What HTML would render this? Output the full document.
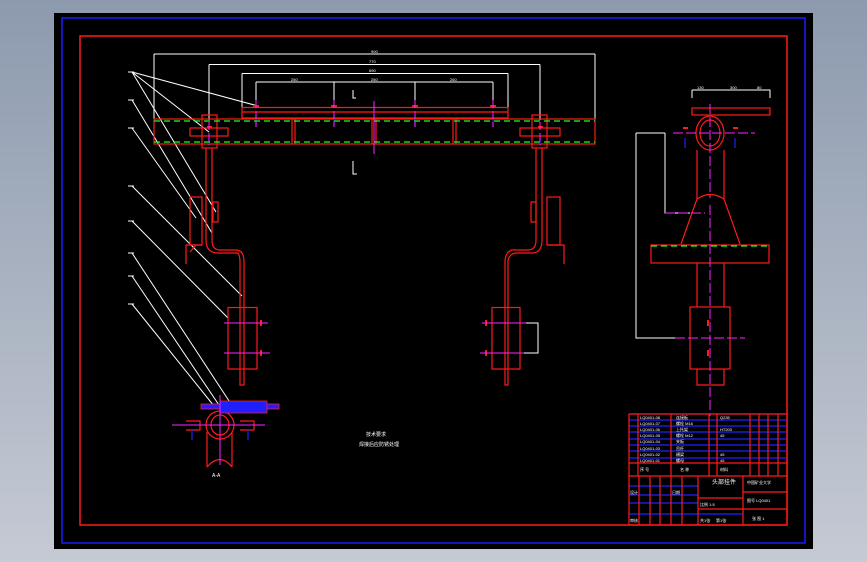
<!DOCTYPE html>
<html><head><meta charset="utf-8"><style>
html,body{margin:0;padding:0;}
body{width:867px;height:562px;overflow:hidden;background:linear-gradient(#8d9aae,#c5cad4);font-family:"Liberation Sans","Noto Sans CJK SC",sans-serif;}
svg{position:absolute;left:0;top:0}
</style></head><body>
<svg width="867" height="562" viewBox="0 0 867 562" xmlns="http://www.w3.org/2000/svg" font-family="Liberation Sans, Noto Sans CJK SC, sans-serif">
<rect x="54" y="13" width="759" height="536" fill="#000"/>
<rect x="62" y="18" width="743" height="525" fill="none" stroke="#1a1aff" stroke-width="1.5"/>
<rect x="80" y="36" width="707" height="489" fill="none" stroke="#ff1a1a" stroke-width="1.5"/>

<!-- dimensions -->
<g stroke="#fff" stroke-width="1" fill="none">
<path d="M154 54H595M154 54V120M595 54V120"/>
<path d="M209 64.5H540M209 64.5V120M540 64.5V120"/>
<path d="M242 73.5H508M242 73.5V108M508 73.5V108"/>
<path d="M256 82H493M256 82V106M334 82V106M415 82V106M493 82V106"/>
<path d="M353 90V98H356M353 161V174H357"/>
<path d="M636 133H665M636 133V338H675M665 133V213H690"/>
<path d="M692 90H770V98M692 90V98"/>
<path d="M523 323H538V353H523"/>
<path d="M132 72L258 106M132 72L209 132M132 72L216 212M132 100L212 233M132 128L196 218M132 186L242 296M132 221L228 318M132 253L235 410M132 276L221 408M132 304L214 406"/>
<path d="M128 72H134M128 100H134M128 128H134M128 186H134M128 221H134M128 253H134M128 276H134M128 304H134"/>
</g>
<g fill="#fff" font-size="4">
<text x="371" y="53">900</text><text x="369" y="63">770</text><text x="369" y="72">690</text>
<text x="291" y="81">260</text><text x="371" y="81">260</text><text x="450" y="81">260</text>
<text x="697" y="89">130</text><text x="730" y="89">300</text><text x="757" y="89">80</text>
</g>

<!-- main beam -->
<g stroke="#ff1a1a" stroke-width="1.2" fill="none">
<rect x="242" y="107.5" width="266" height="10.5"/>
<path d="M242 112H508"/>
<rect x="154" y="119" width="441" height="25"/>
<path d="M292 119V144M295 119V144M453 119V144M456 119V144M372 119V144M376 119V144"/>
<rect x="202" y="115" width="15" height="33"/><rect x="190" y="128" width="38" height="8"/>
<rect x="532" y="115" width="15" height="33"/><rect x="520" y="128" width="40" height="8"/>
<!-- left hanger -->
<path d="M206 148V240Q206 253 218 253H238Q240 256 240 262V385H244V262Q244 250 236 250H220Q212 250 212 240V148"/>
<rect x="190" y="197" width="12" height="48"/><path d="M186 245H202M186 245V264M196 245L190 252"/>
<rect x="213" y="202" width="5" height="20"/>
<rect x="228" y="307.5" width="29" height="61.5"/>
<!-- right hanger -->
<path d="M536 148V240Q536 250 528 250H512Q505 252 505 262V385H508V262Q508 255 515 253H532Q542 253 542 240V148"/>
<rect x="547" y="197" width="13" height="48"/><path d="M547 245H564V264"/>
<rect x="531" y="202" width="5" height="20"/>
<rect x="492" y="307.5" width="28" height="61.5"/>
<!-- side view -->
<rect x="692" y="108" width="78" height="7"/>
<ellipse cx="710" cy="133" rx="14" ry="17"/><ellipse cx="710" cy="133" rx="10" ry="13"/>
<path d="M697 150V199M724 150V199"/>
<path d="M681 244L697 199Q710 190 724 199L740 244"/>
<rect x="651" y="245" width="118" height="18"/>
<path d="M697 263V307M724 263V307"/>
<rect x="690" y="307" width="40" height="62"/>
<path d="M697 369V385H724V369"/>
<!-- bottom detail -->
<ellipse cx="220" cy="425" rx="14" ry="14"/><ellipse cx="220" cy="425" rx="9" ry="10"/>
<path d="M207 432V467M232 432V467M207 467Q220 452 232 467"/>
<path d="M186 421H200V430H186M240 421H254V430H240"/>
</g>
<g fill="#2020ff" stroke="#ff1a1a" stroke-width="0.8">
<rect x="201" y="404" width="78" height="5"/><rect x="220" y="401" width="47" height="12"/>
</g>
<g stroke="#2020ff" stroke-width="1.2">
<path d="M256 118V127M334 118V127M415 118V127M493 118V127M209 136V145M540 136V145M192 430V440M248 430V440M685 138V148M735 138V148"/>
</g>
<g stroke="#ff1a1a" stroke-width="2">
<path d="M253 106H259M331 106H337M412 106H418M490 106H496M207 127H212M538 127H543M683 128H688M733 128H738"/>
<path d="M261 320V326M261 350V356M486 320V326M486 350V356M708 320V326M708 350V356"/>
</g>
<!-- green dashed -->
<g stroke="#1aff1a" stroke-width="1.2" stroke-dasharray="6 4">
<path d="M154 121H595M154 142H595M651 246H769"/>
</g>
<!-- magenta centerlines -->
<g stroke="#ff22ff" stroke-width="1">
<path d="M374 101V154"/>
<path d="M256 100V127M334 100V127M415 100V127M493 100V127M209 122V145M540 122V145" stroke-dasharray="8 3"/>
<path d="M224 323H268M224 353H270M482 323H526M480 353H524"/>
<path d="M673 133H755M710 104V198M710 205V416M665 213H705M675 338H745" stroke-dasharray="10 3"/>
<path d="M172 425H265M220 395V465"/>
</g>
<!-- tech text -->
<g fill="#fff" font-size="5">
<text x="366" y="436">技术要求</text>
<text x="359" y="446">焊接后应防锈处理</text>
<text x="212" y="477">A-A</text>
</g>

<!-- title block -->
<g stroke="#2020ff" stroke-width="1.2">
<path d="M629 414H787M629 420H787M629 426H787M629 432H787M629 439H787M629 445H787M629 451H787M629 458H787"/>
<path d="M629 486H698M629 495H698M629 503H698M629 514H743"/>
</g>
<g stroke="#ff1a1a" stroke-width="1.2" fill="none">
<rect x="629" y="414" width="158" height="111"/>
<path d="M629 463H787M629 476H787M638 414V476M671 414V476M709 414V476M717 414V476M750 414V476M759 414V476M768 414V476M778 414V476"/>
<path d="M698 476V525M743 476V525M743 492H787M743 509H787M698 498H743M698 509H743M639 476V525M650 476V525M660 476V525M671 476V525M682 476V525"/>
</g>
<g fill="#fff" font-size="4">
<text x="640" y="419">LQ0401-08</text><text x="640" y="425">LQ0401-07</text><text x="640" y="431">LQ0401-06</text><text x="640" y="437">LQ0401-05</text><text x="640" y="443">LQ0401-04</text><text x="640" y="450">LQ0401-03</text><text x="640" y="456">LQ0401-02</text><text x="640" y="462">LQ0401-01</text>
<text x="676" y="419">连接板</text><text x="676" y="425">螺栓 M16</text><text x="676" y="431">上托架</text><text x="676" y="437">螺栓 M12</text><text x="676" y="443">夹板</text><text x="676" y="450">吊杆</text><text x="676" y="456">横梁</text><text x="676" y="462">螺母</text>
<text x="720" y="419">Q235</text><text x="720" y="431">HT200</text><text x="720" y="437">45</text><text x="720" y="456">45</text><text x="720" y="462">45</text>
<text x="640" y="471">序  号</text><text x="680" y="471">名  称</text><text x="720" y="471">材料</text>
<text x="712" y="484" font-size="6">头部挂件</text>
<text x="747" y="484">中国矿业大学</text>
<text x="747" y="502">图号 LQ0401</text>
<text x="700" y="506">比例 1:5</text>
<text x="700" y="522">共1张</text><text x="716" y="522">第1张</text>
<text x="752" y="520">张 图 1</text>
<text x="630" y="494">设计</text><text x="672" y="494">日期</text><text x="630" y="522">审核</text>
</g>
</svg>
</body></html>
